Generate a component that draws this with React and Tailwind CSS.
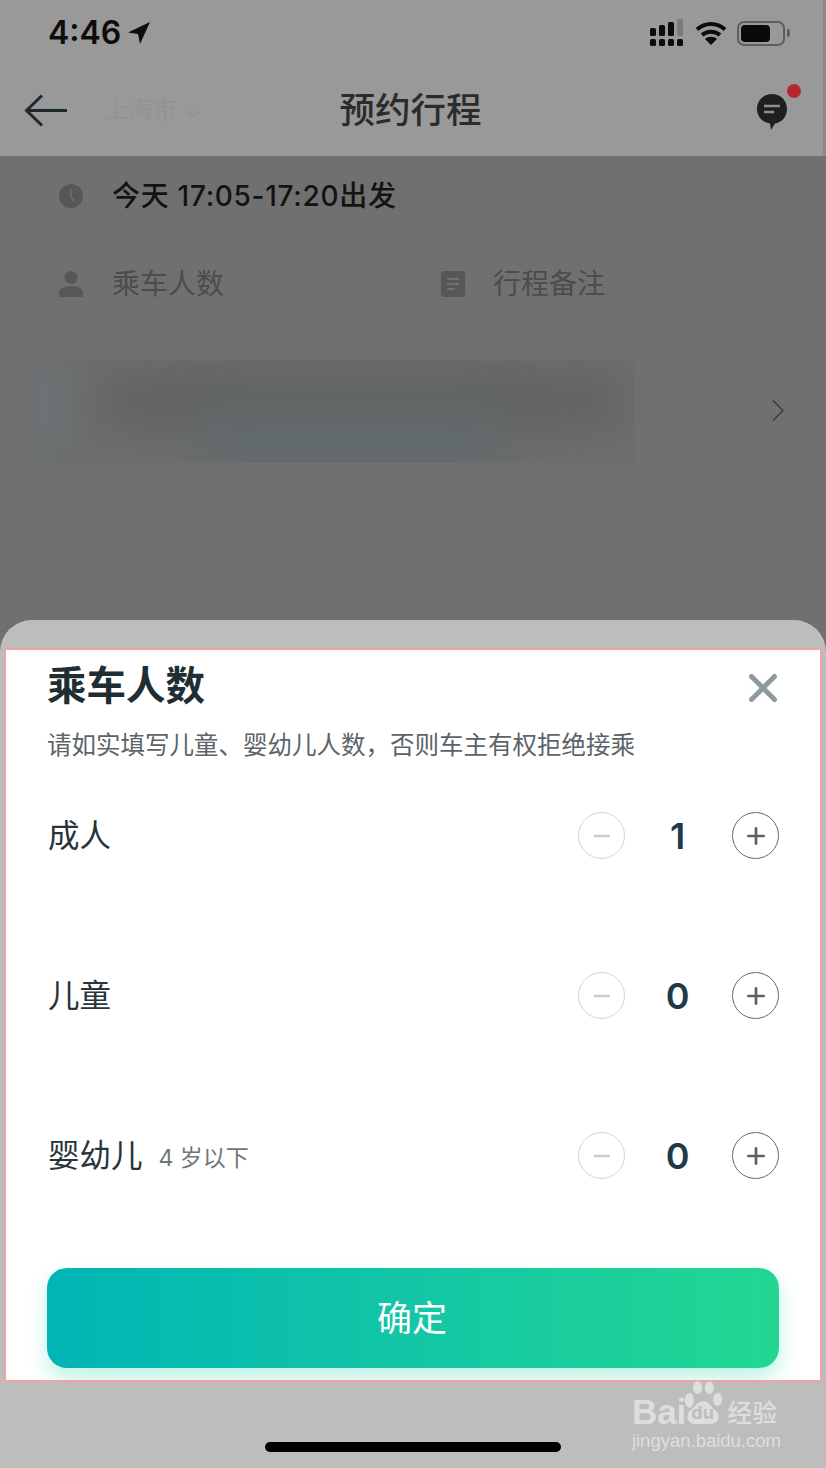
import { Minus, Plus, X } from 'lucide-react'

const cjk = "font-['Inter','Noto_Sans_CJK_SC',sans-serif]"

function StatusBar() {
  return (
    <div className="h-[62px] pl-[48px] pr-[33px] pt-[4px] flex items-center justify-between">
      <div className="flex items-center gap-[6px]">
        <span className="text-[32px] leading-none font-semibold text-[#0c0c0c]">4:46</span>
        <svg width="24" height="24" viewBox="0 0 24 24"><path d="M23 1 1 11.5l10 1.5 2 10z" fill="#0c0c0c" /></svg>
      </div>
      <div className="flex items-center gap-[10px]">
        <svg width="36" height="28" viewBox="0 0 36 28">
          <g fill="#0c0c0c">
            <rect x="1" y="9" width="6" height="8" rx="1.5" />
            <rect x="10" y="6" width="6" height="11" rx="1.5" />
            <rect x="19" y="3" width="6" height="14" rx="1.5" />
            <rect x="1" y="20" width="6" height="7" rx="1.5" />
            <rect x="10" y="20" width="6" height="7" rx="1.5" />
            <rect x="19" y="20" width="6" height="7" rx="1.5" />
            <rect x="28" y="20" width="6" height="7" rx="1.5" />
          </g>
          <rect x="28" y="0" width="6" height="17" rx="1" fill="#7b7b7b" />
        </svg>
        <svg width="32" height="26" viewBox="0 0 32 26" fill="none">
          <path d="M2 9.5c8-7.500 20-7.500 28 0M7 15c5-4.500 13-4.500 18 0" stroke="#0c0c0c" strokeWidth="4" />
          <path d="m16 25-6-6c3-3 9-3 12 0z" fill="#0c0c0c" />
        </svg>
        <div className="flex items-center gap-[2px]">
          <div className="w-[48px] h-[25px] rounded-[7px] border-2 border-[#5e5e5e] p-[2px]">
            <div className="w-[29px] h-full rounded-[4px] bg-[#0a0a0a]" />
          </div>
          <div className="w-[3px] h-[8px] rounded-r-full bg-[#5e5e5e]" />
        </div>
      </div>
    </div>
  )
}

function NavBar() {
  return (
    <div className="h-[94px] pl-[24px] pr-[36px] flex items-center justify-between">
      <div className="flex items-center gap-[38px] w-[200px]">
        <svg width="43" height="33" viewBox="0 0 43 33" fill="none" className="mt-[3px] shrink-0">
          <path d="M43 16.500H3M18 1.500 2.500 16.500 18 31.500" stroke="#1c2a30" strokeWidth="3" />
        </svg>
        <span className="text-[24px] text-[#939393] mt-[2px] whitespace-nowrap">上海市 ⌄</span>
      </div>
      <h1 className="text-[35.500px] ml-[10px] mt-[4px] font-medium text-[#2b2b2b]">预约行程</h1>
      <div className="w-[200px] flex justify-end">
        <div className="relative mt-[6px] -mr-[1px] w-[32px] h-[38px]">
          <svg width="32" height="38" viewBox="0 0 32 38">
            <path d="M16 1c8.500 0 15 6.500 15 15 0 7.500-5 13.500-12 14.500L15 37l-1-6.500C6.500 29.500 1 23.500 1 16 1 7.500 7.500 1 16 1z" fill="#1f1f1f" />
            <path d="M8 13h16M8 19h10" stroke="#8e8e8e" strokeWidth="2.500" />
          </svg>
          <div className="absolute -top-[9px] -right-[13px] w-[14px] h-[14px] rounded-full bg-[#b5272e]" />
        </div>
      </div>
    </div>
  )
}

function InfoIcon({ kind }) {
  if (kind === 'clock') {
    return (
      <svg width="24" height="24" viewBox="0 0 24 24">
        <circle cx="12" cy="12" r="12" fill="#565759" />
        <path d="M12 5v8l3 4" stroke="#707070" strokeWidth="1.500" fill="none" />
      </svg>
    )
  }
  if (kind === 'user') {
    return (
      <svg width="24" height="26" viewBox="0 0 24 26" fill="#565759">
        <circle cx="12" cy="6.500" r="6.500" />
        <path d="M0 26v-4c0-4 4-7 12-7s12 3 12 7v4z" />
      </svg>
    )
  }
  return (
    <svg width="24" height="26" viewBox="0 0 24 26">
      <rect width="24" height="26" rx="3" fill="#565759" />
      <path d="M6 8h12M6 13h12M6 18h8" stroke="#707070" strokeWidth="2" />
    </svg>
  )
}

function BlurredCard() {
  return (
    <div className="mx-[18px] mt-[21px] h-[110px] rounded-[22px] border border-[#737373] relative overflow-hidden">
      <div className="absolute left-[12px] top-[4px] w-[604px] h-[103px] overflow-hidden bg-[#6e6e6e]">
        <div className="absolute left-[70px] top-[16px] w-[520px] h-[50px] bg-[#5f6060] blur-[24px]" />
        <div className="absolute left-[170px] top-[50px] w-[300px] h-[60px] bg-[#616a6c] blur-[24px]" />
        <div className="absolute -left-[10px] top-0 w-[50px] h-[90px] bg-[#6c7374] blur-[14px]" />
      </div>
      <svg width="12" height="21" viewBox="0 0 12 21" fill="none" className="absolute right-[23px] top-[44px]">
        <path d="M1 .5 11 10.500 1 20.500" stroke="#3c3c3c" strokeWidth="1.500" />
      </svg>
    </div>
  )
}

function Stepper({ value }) {
  return (
    <div className="flex items-center">
      <button className="w-[47px] h-[47px] rounded-full border border-[#d4d4d4] flex items-center justify-center">
        <Minus size={24} strokeWidth={2.500} className="text-[#cbcbcb]" />
      </button>
      <span className="w-[107px] pr-[2px] text-center text-[36px] leading-none font-semibold text-[#1e3a4a]">{value}</span>
      <button className="w-[47px] h-[47px] rounded-full border border-[#666666] flex items-center justify-center">
        <Plus size={26} strokeWidth={2.500} className="text-[#5f5f5f]" />
      </button>
    </div>
  )
}

function Row({ label, hint, value }) {
  return (
    <div className="h-[160px] flex items-start justify-between">
      <div className="h-[47px] pl-[1px] pt-[1px] flex items-center">
        <span className="text-[31.500px] text-[#27343a]">{label}</span>
        {hint && <span className="ml-[16px] mt-[4px] text-[23px] text-[#6f7679]">{hint}</span>}
      </div>
      <Stepper value={value} />
    </div>
  )
}

function Watermark() {
  return (
    <div className="absolute right-[45px] bottom-[18px] text-[#dedede] flex flex-col items-start">
      <div className="flex items-end h-[47px]">
        <span className="text-[35px] leading-[30px] font-bold font-['Liberation_Sans',sans-serif]">Bai</span>
        <div className="relative w-[42px] h-[46px] ml-[-4px]">
          <svg width="42" height="46" viewBox="0 0 46 50" fill="#dedede">
            <ellipse cx="8" cy="21" rx="5" ry="8" />
            <ellipse cx="17" cy="7" rx="5" ry="7" />
            <ellipse cx="30" cy="7" rx="5" ry="7" />
            <ellipse cx="39" cy="20" rx="5" ry="7" />
            <path d="M23 22c-7 0-8 6-14 10-6 5-3 15 6 15h16c9 0 12-10 6-15-6-4-7-10-14-10z" />
          </svg>
          <span className="absolute left-[9px] bottom-[5px] text-[18px] leading-none font-bold text-[#bdbdbd]">du</span>
        </div>
        <span className="text-[25px] leading-[28px] ml-[3px] font-medium">经验</span>
      </div>
      <span className="text-[18.500px] leading-none mt-[5px] font-['Liberation_Sans',sans-serif]">jingyan.baidu.com</span>
    </div>
  )
}

export default function App() {
  return (
    <div className={`w-[826px] h-[1468px] overflow-hidden bg-[#707070] flex flex-col ${cjk}`}>
      <div className="bg-[#999999] h-[156px] shrink-0 border-r-[3px] border-[#8a8a8a]">
        <StatusBar />
        <NavBar />
      </div>

      <div className="h-[464px] shrink-0">
        <div className="h-[178px] rounded-b-[22px] border-b border-[#737373] px-[59px]">
          <div className="h-[80px] flex items-center gap-[29px]">
            <InfoIcon kind="clock" />
            <span className="text-[28px] font-medium text-[#131313] tracking-[0.7px]">今天 17:05-17:20出发</span>
          </div>
          <div className="h-[96px] flex items-center">
            <div className="w-[382px] flex items-center gap-[29px]">
              <InfoIcon kind="user" />
              <span className="text-[28px] text-[#4b4c4e]">乘车人数</span>
            </div>
            <div className="flex items-center gap-[28px]">
              <InfoIcon kind="note" />
              <span className="text-[28px] text-[#4b4c4e]">行程备注</span>
            </div>
          </div>
        </div>
        <BlurredCard />
      </div>

      <div className="flex-1 bg-[#bdbdbd] rounded-t-[32px] pt-[28px] relative">
        <div className="mx-[4px] h-[734px] bg-white border-2 border-[#efa3a3] px-[41px] overflow-hidden">
          <div className="flex items-start justify-between">
            <h2 className="text-[39.500px] leading-[60px] font-semibold text-[#1f2e33] mt-[6px]">乘车人数</h2>
            <X size={46} strokeWidth={2.600} className="text-[#8e9a9f] mt-[15px] -mr-[7px]" />
          </div>
          <p className="text-[24.500px] leading-[36px] text-[#5b6468] mt-[11px]">请如实填写儿童、婴幼儿人数，否则车主有权拒绝接乘</p>
          <div className="mt-[49px]">
            <Row label="成人" value="1" />
            <Row label="儿童" value="0" />
            <Row label="婴幼儿" hint="4 岁以下" value="0" />
          </div>
          <button className="w-full h-[100px] pr-[2px] -mt-[24px] rounded-[20px] bg-gradient-to-r from-[#02b5b5] to-[#23d792] text-white text-[35px] shadow-[0_10px_20px_rgba(35,215,170,0.3)]">
            确定
          </button>
        </div>
        <div className="mt-[60px] mx-auto w-[296px] h-[10px] rounded-full bg-black" />
        <Watermark />
      </div>
    </div>
  )
}
